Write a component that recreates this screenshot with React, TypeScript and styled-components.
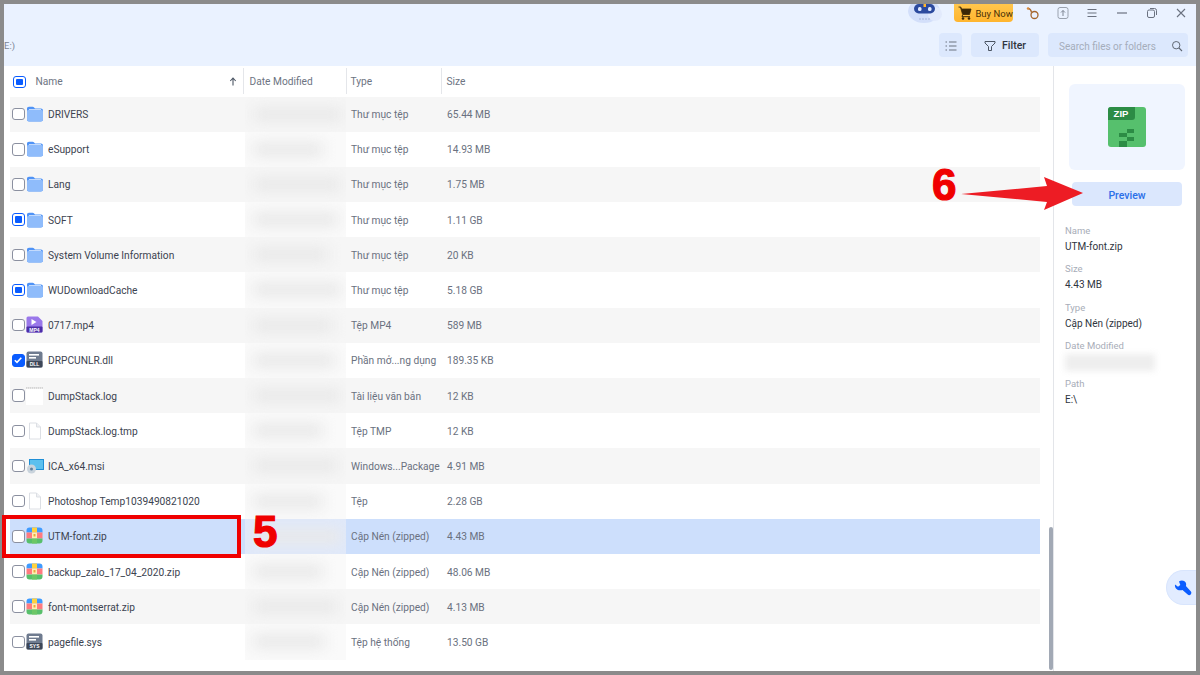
import React from "react";
import styled, { createGlobalStyle } from "styled-components";

const Global = createGlobalStyle`
  html, body { margin: 0; padding: 0; width: 1200px; height: 675px; overflow: hidden; background: #8b8b8b; }
  #root { width: 1200px; height: 675px; }
  * { box-sizing: border-box; }
`;

const Frame = styled.div`
  position: relative;
  width: 1200px;
  height: 675px;
  padding: 4px;
  background: #8b8b8b;
  font-family: Roboto, "Noto Sans", sans-serif;
  overflow: hidden;
`;
const Win = styled.div`
  position: relative;
  width: 100%;
  height: 100%;
  background: #fff;
  display: flex;
  flex-direction: column;
  overflow: hidden;
`;
const Top = styled.header`
  height: 62px;
  flex: none;
  background: #eaf2ff;
  display: flex;
  flex-direction: column;
`;
const TitleBar = styled.div`
  height: 29px;
  display: flex;
  justify-content: flex-end;
  align-items: flex-start;
`;
const Cloud = styled.div`
  width: 34px;
  height: 20px;
  margin-right: 12px;
`;
const BuyNow = styled.div`
  width: 59px;
  height: 18px;
  border-radius: 0 0 4px 4px;
  background: linear-gradient(180deg, #ffc64d, #ffb52e);
  color: #4a3208;
  font-size: 9.5px;
  display: flex;
  align-items: center;
  gap: 3px;
  padding-left: 4px;
  margin-right: 5px;
  white-space: nowrap;
`;
const WinIcon = styled.div`
  width: 29.6px;
  height: 18px;
  display: flex;
  align-items: center;
  justify-content: center;
`;
const ToolBar = styled.div`
  flex: 1;
  display: flex;
  align-items: flex-start;
  padding-right: 8px;
`;
const Crumb = styled.div`
  font-size: 9.5px;
  line-height: 25px;
  color: #7b8494;
  flex: 1;
`;
const ToolBtn = styled.div<{ $w: number }>`
  width: ${(p) => p.$w}px;
  height: 24px;
  border-radius: 4px;
  background: #dce8fd;
  display: flex;
  align-items: center;
  justify-content: center;
  gap: 6px;
  margin-right: 9px;
  padding-top: 1px;
  font-size: 10.5px;
  font-weight: 500;
  color: #2f3540;
`;
const Search = styled.div`
  width: 140px;
  height: 24px;
  border-radius: 4px;
  background: #dce8fd;
  display: flex;
  align-items: center;
  justify-content: space-between;
  padding: 2px 5px 0 11px;
  font-size: 10px;
  color: #a5adbb;
`;
const Body = styled.div`
  flex: 1;
  display: flex;
  min-height: 0;
`;
const List = styled.section`
  position: relative;
  width: 1049px;
  flex: none;
  padding-left: 6px;
`;
const HeadRow = styled.div`
  height: 30.5px;
  width: 1030px;
  display: grid;
  grid-template-columns: 233.5px 103px 95px 1fr;
  font-size: 10.2px;
  color: #6d7482;
  align-items: center;
`;
const HeadName = styled.div`
  display: flex;
  align-items: center;
  height: 26px;
  border-right: 1px solid #e4e6ea;
  padding: 1px 7px 0 3px;
  gap: 10px;
`;
const HeadCell = styled.div<{ $pad: number; $line?: boolean }>`
  height: 26px;
  display: flex;
  align-items: center;
  padding-top: 1px;
  padding-left: ${(p) => p.$pad}px;
  border-right: ${(p) => (p.$line ? "1px solid #e4e6ea" : "none")};
`;
const SortArrow = styled.svg`
  margin-left: auto;
  margin-right: -1px;
`;
const Row = styled.div<{ $alt: boolean; $sel: boolean }>`
  height: 35.2px;
  width: 1030px;
  display: grid;
  grid-template-columns: 235px 101px 95px 1fr;
  align-items: center;
  font-size: 10.2px;
  color: #3c4350;
  background: ${(p) => (p.$sel ? "#cddffc" : p.$alt ? "#f6f6f6" : "#fff")};
`;
const NameCell = styled.div`
  display: flex;
  align-items: center;
  padding-left: 2px;
  white-space: nowrap;
`;
const NameText = styled.span`
  padding-top: 1px;
`;
const Box = styled.span<{ $state?: "none" | "part" | "all" }>`
  width: 12.5px;
  height: 12.5px;
  flex: none;
  border-radius: 3px;
  border: 1px solid ${(p) => (p.$state && p.$state !== "none" ? "#0a5cff" : "#8b90a0")};
  background: ${(p) => (p.$state === "all" ? "#0a5cff" : "#fff")};
  display: flex;
  align-items: center;
  justify-content: center;
`;
const PartDot = styled.span`
  width: 6.5px;
  height: 6.5px;
  border-radius: 1px;
  background: #0a5cff;
`;
const IconSlot = styled.span`
  width: 18px;
  height: 18px;
  margin: 0 4.5px 0 1px;
  flex: none;
  display: flex;
`;
const DateCell = styled.div<{ $sel: boolean; $alt: boolean }>`
  height: 100%;
  position: relative;
  overflow: hidden;
  background: ${(p) => (p.$sel ? "#e0e9fa" : p.$alt ? "#f6f6f6" : "#fafafa")};
`;
const Smear = styled.div<{ $w: number }>`
  position: absolute;
  left: 8px;
  top: 10px;
  height: 15px;
  width: ${(p) => p.$w}px;
  background: #e9e9e9;
  filter: blur(7px);
`;
const TypeCell = styled.div`
  padding: 1px 0 0 5px;
  color: #6a7180;
  white-space: nowrap;
`;
const SizeCell = styled.div`
  padding: 1px 0 0 6px;
  color: #6a7180;
  white-space: nowrap;
`;
const Thumb = styled.div`
  position: absolute;
  left: 1045px;
  bottom: 1px;
  width: 4px;
  height: 143px;
  border-radius: 2px;
  background: #a2a9b5;
`;
const Side = styled.aside`
  flex: 1;
  border-left: 1px solid #e3e5e9;
  padding: 18px 11px 0 15px;
  display: flex;
  flex-direction: column;
  align-items: flex-start;
`;
const PreviewTile = styled.div`
  width: 116px;
  height: 86px;
  border-radius: 6px;
  background: #f0f5ff;
  display: flex;
  align-items: center;
  justify-content: center;
`;
const PreviewBtn = styled.div`
  width: 110px;
  height: 24px;
  margin: 12px 0 18px 3px;
  padding-top: 2px;
  border-radius: 4px;
  background: #dbe7fd;
  color: #2a6fe8;
  font-weight: 500;
  font-size: 10.5px;
  display: flex;
  align-items: center;
  justify-content: center;
`;
const Detail = styled.div`
  height: 38.3px;
  margin-left: -4px;
  width: 100%;
`;
const Label = styled.div`
  font-size: 9.5px;
  line-height: 14px;
  color: #a8adb8;
`;
const Value = styled.div`
  margin-top: 1px;
  font-size: 10px;
  line-height: 15px;
  color: #2f3540;
`;
const BlurValue = styled.div`
  margin-top: 1px;
  width: 90px;
  height: 17px;
  background: #eeeeee;
  filter: blur(3px);
`;
const WrenchPill = styled.div`
  position: absolute;
  right: 0;
  top: 566px;
  width: 30px;
  height: 35px;
  border-radius: 18px 0 0 18px;
  background: #e2ecff;
  border: 1px solid #d8e5fd;
  border-right: none;
  display: flex;
  align-items: center;
  justify-content: center;
  padding-left: 2px;
`;
const RedRect = styled.div`
  position: absolute;
  left: 2px;
  top: 515px;
  width: 239px;
  height: 43px;
  border: 4px solid #f00000;
`;
const Num = styled.div<{ $x: number; $y: number }>`
  position: absolute;
  left: ${(p) => p.$x}px;
  top: ${(p) => p.$y}px;
  font-family: "Liberation Sans", Arial, sans-serif;
  font-weight: 700;
  font-size: 44px;
  line-height: 44px;
  color: #f00000;
  -webkit-text-stroke: 1.2px #f00000;
`;
const ArrowSvg = styled.svg`
  position: absolute;
  left: 960px;
  top: 175px;
`;

const Folder = () => (
  <svg width="18" height="18" viewBox="0 0 18 18">
    <path d="M1 3.500C1 2.500 1.800 1.800 3 1.800h3.600c.7 0 1.100.3 1.500.8L9 3.500h6c1.100 0 2 .9 2 2v9c0 1.200-.9 2-2 2H3c-1.200 0-2-.8-2-2z" fill="#4f93f6" />
    <path d="M1 6.500c0-1 .8-1.800 1.800-1.800h12.400c1 0 1.800.8 1.800 1.800v8c0 1.100-.9 1.800-2 1.800H3c-1.100 0-2-.7-2-1.800z" fill="#8fbcfb" />
    <path d="M3 4h12v.7H3z" fill="#fff" opacity=".9" />
  </svg>
);
const Zip = () => (
  <svg width="17" height="17" viewBox="0 0 17 17">
    <path d="M.5 5.500v-2a3 3 0 0 1 3-3h10a3 3 0 0 1 3 3v2z" fill="#3f9bff" />
    <rect x="0.500" y="5.500" width="16" height="6" fill="#ff7a7f" />
    <path d="M.5 11.500h16v2a3 3 0 0 1-3 3h-10a3 3 0 0 1-3-3z" fill="#58bf6b" />
    <rect x="6" y="0.500" width="5" height="5" fill="#ffd23f" />
    <rect x="6" y="5.500" width="5" height="6" fill="#ffeeb5" />
    <rect x="6" y="11.500" width="5" height="5" fill="#6cc766" />
    <rect x="7.500" y="7" width="2" height="2.500" fill="#eda83a" />
  </svg>
);
const Blank = () => (
  <svg width="18" height="18" viewBox="0 0 18 18">
    <path d="M3.500 1h7l4 4v12h-11z" fill="#fff" stroke="#dcdfe4" strokeWidth="1" />
    <path d="M10.500 1v4h4" fill="#f0f1f3" stroke="#dcdfe4" strokeWidth="1" />
  </svg>
);
const LogIcon = () => (
  <svg width="18" height="18" viewBox="0 0 18 18">
    <rect width="17" height="17" y="1" fill="#fff" />
    <path d="M0 1h17" stroke="#b5b5b5" strokeWidth="1" strokeDasharray="1.500 .5" />
  </svg>
);
const Mp4 = () => (
  <svg width="17" height="17" viewBox="0 0 17 17">
    <path d="M2 .5h10l4.500 4.500v10a1.500 1.500 0 0 1-1.500 1.500H2A1.500 1.500 0 0 1 .5 15V2A1.500 1.500 0 0 1 2 .5z" fill="#9a78ea" />
    <path d="M5.500 3l5 3-5 3z" fill="#fff" />
    <rect x="0.500" y="10.500" width="16" height="6" rx="1" fill="#4c2fa8" />
    <text x="8.500" y="15.500" textAnchor="middle" fontSize="5" fontWeight="700" fill="#fff" fontFamily="Liberation Sans">MP4</text>
  </svg>
);
const Sys = ({ label }: { label: string }) => (
  <svg width="17" height="17" viewBox="0 0 17 17">
    <rect x="0.500" y="0.500" width="16" height="16" rx="2" fill="#6f7b8f" />
    <rect x="3" y="3" width="10" height="1.600" fill="#fff" />
    <rect x="3" y="6" width="7" height="1.600" fill="#fff" />
    <rect x="0.500" y="10" width="16" height="6.500" rx="1" fill="#3d4758" />
    <text x="8.500" y="15.200" textAnchor="middle" fontSize="5" fontWeight="700" fill="#fff" fontFamily="Liberation Sans">{label}</text>
  </svg>
);
const Msi = () => (
  <svg width="18" height="18" viewBox="0 0 18 18">
    <rect x="3" y="2" width="15" height="11" fill="#1f8fd6" />
    <rect x="4" y="3" width="13" height="9" fill="#5cc0ee" />
    <circle cx="5.500" cy="12" r="4.500" fill="#c9d3dc" />
    <circle cx="5.500" cy="12" r="1.500" fill="#5f7f9c" />
  </svg>
);

type R = { n: string; t: string; s: string; i: React.ReactNode; c?: "part" | "all"; w: number };
const rows: R[] = [
  { n: "DRIVERS", t: "Thư mục tệp", s: "65.44 MB", i: <Folder />, w: 90 },
  { n: "eSupport", t: "Thư mục tệp", s: "14.93 MB", i: <Folder />, w: 70 },
  { n: "Lang", t: "Thư mục tệp", s: "1.75 MB", i: <Folder />, w: 88 },
  { n: "SOFT", t: "Thư mục tệp", s: "1.11 GB", i: <Folder />, c: "part", w: 85 },
  { n: "System Volume Information", t: "Thư mục tệp", s: "20 KB", i: <Folder />, w: 75 },
  { n: "WUDownloadCache", t: "Thư mục tệp", s: "5.18 GB", i: <Folder />, c: "part", w: 88 },
  { n: "0717.mp4", t: "Tệp MP4", s: "589 MB", i: <Mp4 />, w: 80 },
  { n: "DRPCUNLR.dll", t: "Phần mở...ng dụng", s: "189.35 KB", i: <Sys label="DLL" />, c: "all", w: 82 },
  { n: "DumpStack.log", t: "Tài liệu văn bản", s: "12 KB", i: <LogIcon />, w: 88 },
  { n: "DumpStack.log.tmp", t: "Tệp TMP", s: "12 KB", i: <Blank />, w: 70 },
  { n: "ICA_x64.msi", t: "Windows...Package", s: "4.91 MB", i: <Msi />, w: 85 },
  { n: "Photoshop Temp1039490821020", t: "Tệp", s: "2.28 GB", i: <Blank />, w: 70 },
  { n: "UTM-font.zip", t: "Cập Nén (zipped)", s: "4.43 MB", i: <Zip />, w: 88 },
  { n: "backup_zalo_17_04_2020.zip", t: "Cập Nén (zipped)", s: "48.06 MB", i: <Zip />, w: 70 },
  { n: "font-montserrat.zip", t: "Cập Nén (zipped)", s: "4.13 MB", i: <Zip />, w: 85 },
  { n: "pagefile.sys", t: "Tệp hệ thống", s: "13.50 GB", i: <Sys label="SYS" />, w: 72 },
];

const Check = () => (
  <svg width="10" height="10" viewBox="0 0 10 10">
    <path d="M1.800 5.200l2.200 2.200 4.300-4.600" fill="none" stroke="#fff" strokeWidth="1.600" />
  </svg>
);

export default function App() {
  return (
    <Frame>
      <Global />
      <Win>
        <Top>
          <TitleBar>
            <Cloud>
              <svg width="34" height="20" viewBox="0 0 34 20">
                <ellipse cx="16" cy="7" rx="16" ry="12" fill="#d3dffa" />
                <ellipse cx="27" cy="10" rx="7" ry="7" fill="#e2eafc" />
                <rect x="6" y="0" width="21" height="9.500" rx="4.700" fill="#2c4a9e" />
                <rect x="10" y="3" width="3.500" height="4" rx="1.500" fill="#dfe8ff" />
                <rect x="20" y="3" width="3.500" height="4" rx="1.500" fill="#dfe8ff" />
                <rect x="15.500" y="0" width="2.500" height="3" fill="#ffb52e" />
                <path d="M11 15h11" stroke="#b7c4e4" strokeWidth="1.500" strokeDasharray="2 1" />
              </svg>
            </Cloud>
            <BuyNow>
              <svg width="14" height="14" viewBox="0 0 14 14">
                <path d="M.5 1h2.300l.7 2H13l-1.500 5.500H4.600L2.600 1.600" fill="#3b2806" stroke="#3b2806" strokeWidth=".8" />
                <path d="M4.500 9L4 10.700h8" fill="none" stroke="#3b2806" strokeWidth="1" />
                <circle cx="5" cy="12.500" r="1.300" fill="#3b2806" />
                <circle cx="11" cy="12.500" r="1.300" fill="#3b2806" />
              </svg>
              Buy Now
            </BuyNow>
            <WinIcon>
              <svg width="14" height="14" viewBox="0 0 14 14">
                <circle cx="8.500" cy="9" r="3.500" fill="none" stroke="#a5652c" strokeWidth="1.300" />
                <path d="M2 2.500c1.500 0 3 1.500 3.500 4" fill="none" stroke="#a5652c" strokeWidth="1.300" />
                <circle cx="2" cy="2.500" r="1.200" fill="#d88a3c" />
              </svg>
            </WinIcon>
            <WinIcon>
              <svg width="14" height="14" viewBox="0 0 14 14">
                <rect x="2" y="1.500" width="10" height="11" rx="2" fill="none" stroke="#9aa2ae" strokeWidth="1" />
                <path d="M7 10V4.500M5 6.500l2-2 2 2" fill="none" stroke="#7d8592" strokeWidth="1" />
              </svg>
            </WinIcon>
            <WinIcon>
              <svg width="12" height="12" viewBox="0 0 12 12">
                <path d="M1.500 2.500h9M1.500 6h9M1.500 9.500h9" stroke="#6b7280" strokeWidth="1.200" />
              </svg>
            </WinIcon>
            <WinIcon>
              <svg width="12" height="12" viewBox="0 0 12 12">
                <path d="M1 6h10" stroke="#6b7280" strokeWidth="1.200" />
              </svg>
            </WinIcon>
            <WinIcon>
              <svg width="12" height="12" viewBox="0 0 12 12">
                <rect x="1.500" y="3" width="7" height="7.500" rx="1.500" fill="none" stroke="#6b7280" strokeWidth="1" />
                <path d="M4 1.500h4.500a2 2 0 0 1 2 2V8" fill="none" stroke="#6b7280" strokeWidth="1" />
              </svg>
            </WinIcon>
            <WinIcon>
              <svg width="12" height="12" viewBox="0 0 12 12">
                <path d="M2 2l8 8M10 2l-8 8" stroke="#6b7280" strokeWidth="1.100" />
              </svg>
            </WinIcon>
          </TitleBar>
          <ToolBar>
            <Crumb>E:)</Crumb>
            <ToolBtn $w={23}>
              <svg width="12" height="12" viewBox="0 0 12 12">
                <path d="M.5 2h1.500M.5 6h1.500M.5 10h1.500M4 2h7.500M4 6h7.500M4 10h7.500" stroke="#6b7280" strokeWidth="1.100" />
              </svg>
            </ToolBtn>
            <ToolBtn $w={68}>
              <svg width="12" height="12" viewBox="0 0 12 12">
                <path d="M1 1.500h10v1.500L7.500 6.500v4h-3v-4L1 3z" fill="none" stroke="#4b5563" strokeWidth="1" />
              </svg>
              Filter
            </ToolBtn>
            <Search>
              Search files or folders
              <svg width="12" height="12" viewBox="0 0 12 12">
                <circle cx="5.200" cy="5.200" r="3.700" fill="none" stroke="#5f6773" strokeWidth="1" />
                <path d="M8 8l3 3" stroke="#5f6773" strokeWidth="1.100" />
              </svg>
            </Search>
          </ToolBar>
        </Top>
        <Body>
          <List>
            <HeadRow>
              <HeadName>
                <Box $state="part"><PartDot /></Box>
                Name
                <SortArrow width="8" height="9" viewBox="0 0 8 9">
                  <path d="M4 8.500V1.500M1.300 4L4 1l2.700 3" fill="none" stroke="#4b5563" strokeWidth="1.100" />
                </SortArrow>
              </HeadName>
              <HeadCell $pad={6} $line>Date Modified</HeadCell>
              <HeadCell $pad={4} $line>Type</HeadCell>
              <HeadCell $pad={5}>Size</HeadCell>
            </HeadRow>
            {rows.map((r, i) => {
              const sel = r.n === "UTM-font.zip";
              const alt = i % 2 === 0;
              return (
                <Row key={r.n} $alt={alt} $sel={sel}>
                  <NameCell>
                    <Box $state={r.c ?? "none"}>
                      {r.c === "part" && <PartDot />}
                      {r.c === "all" && <Check />}
                    </Box>
                    <IconSlot>{r.i}</IconSlot>
                    <NameText>{r.n}</NameText>
                  </NameCell>
                  <DateCell $sel={sel} $alt={alt}>
                    <Smear $w={r.w} />
                  </DateCell>
                  <TypeCell>{r.t}</TypeCell>
                  <SizeCell>{r.s}</SizeCell>
                </Row>
              );
            })}
            <Thumb />
          </List>
          <Side>
            <PreviewTile>
              <svg width="38" height="40" viewBox="0 0 38 40">
                <rect width="38" height="40" rx="3" fill="#56c06d" />
                <path d="M0 3a3 3 0 0 1 3-3h24v10a3 3 0 0 1-3 3H0z" fill="#2c8c45" />
                <text x="13" y="10" textAnchor="middle" fontSize="9.500" fontWeight="700" fill="#fff" fontFamily="Liberation Sans">ZIP</text>
                <path d="M19 22h7v4h-7zM11 26h8v4h-8zM19 30h7v4h-7zM11 34h8v6h-8z" fill="#2c8c45" />
              </svg>
            </PreviewTile>
            <PreviewBtn>Preview</PreviewBtn>
            <Detail><Label>Name</Label><Value>UTM-font.zip</Value></Detail>
            <Detail><Label>Size</Label><Value>4.43 MB</Value></Detail>
            <Detail><Label>Type</Label><Value>Cập Nén (zipped)</Value></Detail>
            <Detail><Label>Date Modified</Label><BlurValue /></Detail>
            <Detail><Label>Path</Label><Value>E:\</Value></Detail>
          </Side>
        </Body>
        <WrenchPill>
          <svg width="18" height="18" viewBox="0 0 18 18">
            <path d="M1 5.500L4 7.800 6.300 6 5 2.500C7 .8 10.500 1.200 11.700 3.500c.6 1.200.6 2.500.2 3.500l5 5.500c.8 1 .5 2.200-.2 3-.8.800-2 .9-3 .1L8.500 11c-2.500.8-5 .3-6.500-1.500C1 8.200.8 6.800 1 5.500z" fill="#0a5cff" />
          </svg>
        </WrenchPill>
      </Win>
      <RedRect />
      <Num $x={253} $y={510}>5</Num>
      <Num $x={932} $y={163}>6</Num>
      <ArrowSvg width="125" height="36" viewBox="0 0 125 36">
        <path d="M1 19L87 11L84 2L123 18L84 35L87 27z" fill="#ed1c24" />
      </ArrowSvg>
    </Frame>
  );
}
